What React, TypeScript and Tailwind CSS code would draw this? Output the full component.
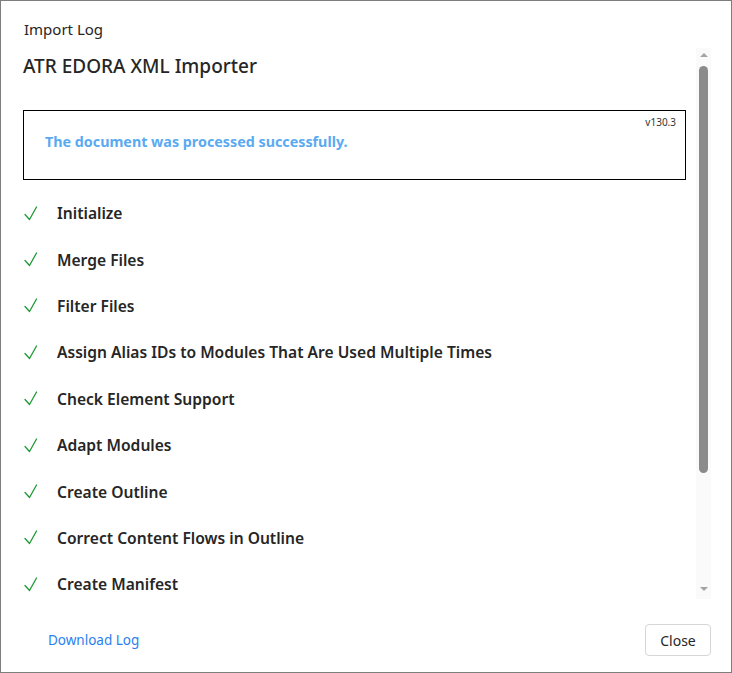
import { FC } from 'react';

const steps = [
  'Initialize',
  'Merge Files',
  'Filter Files',
  'Assign Alias IDs to Modules That Are Used Multiple Times',
  'Check Element Support',
  'Adapt Modules',
  'Create Outline',
  'Correct Content Flows in Outline',
  'Create Manifest',
];

const Check: FC = () => (
  <svg width="14" height="15" viewBox="0 0 14 15" className="block">
    <path d="M1 8.5 L5.5 13.5 L12.5 1" fill="none" stroke="#1c9a34" strokeWidth="1.3" strokeLinecap="round" strokeLinejoin="round" />
  </svg>
);

const FakeScrollbar: FC = () => {
  return (
    <div className="ml-[10px] flex w-[15px] shrink-0 flex-col items-center bg-[#fafafa]">
      <div className="mt-[5px] h-0 w-0 border-x-[4px] border-b-[4px] border-x-transparent border-b-[#a3a3a3]" />
      <div className="mt-[9px] h-[407px] w-[9px] rounded-full bg-[#8b8b8b]" />
      <div className="mt-auto mb-[8px] h-0 w-0 border-x-[4px] border-t-[4px] border-x-transparent border-t-[#a3a3a3]" />
    </div>
  );
};

const App: FC = () => {
  return (
    <div
      className="flex h-[673px] w-[732px] flex-col border border-[#7e7e7e] bg-white text-[#262626]"
      style={{ fontFamily: '"Noto Sans", "Open Sans", sans-serif' }}
    >
      <div className="pl-[23px] pt-[18px] text-[15px] leading-[20px]">Import Log</div>

      <div className="mt-[9px] flex h-[551px] pr-[20px]">
        <div className="min-w-0 flex-1 overflow-hidden pl-[22px]">
          <h1 className="pt-[4px] text-[19px] font-medium leading-[28px]">ATR EDORA XML Importer</h1>

          <div className="relative mt-[30px] h-[70px] border border-black pl-[21px] pt-[21px]">
            <span className="absolute right-[9px] top-[4px] text-[10px] leading-[14px] text-[#333]">v130.3</span>
            <p className="text-[14.3px] font-bold leading-[20px] text-[#5aaaf2]">
              The document was processed successfully.
            </p>
          </div>

          <ul className="mt-[10px]">
            {steps.map((step) => (
              <li key={step} className="flex h-[46.4px] items-center">
                <span className="w-[34px] pl-[1px]">
                  <Check />
                </span>
                <span className="text-[15.6px] font-semibold leading-[22px]">{step}</span>
              </li>
            ))}
          </ul>
        </div>
        <FakeScrollbar />
      </div>

      <div className="flex items-center justify-between pl-[47px] pr-[20px] pt-[25px]">
        <a href="#" className="text-[13.5px] text-[#2a7ff0]">
          Download Log
        </a>
        <button className="h-[32px] w-[66px] rounded-[4px] border border-[#d6d6d6] bg-white text-[14px] text-[#262626]">
          Close
        </button>
      </div>
    </div>
  );
};

export default App;
